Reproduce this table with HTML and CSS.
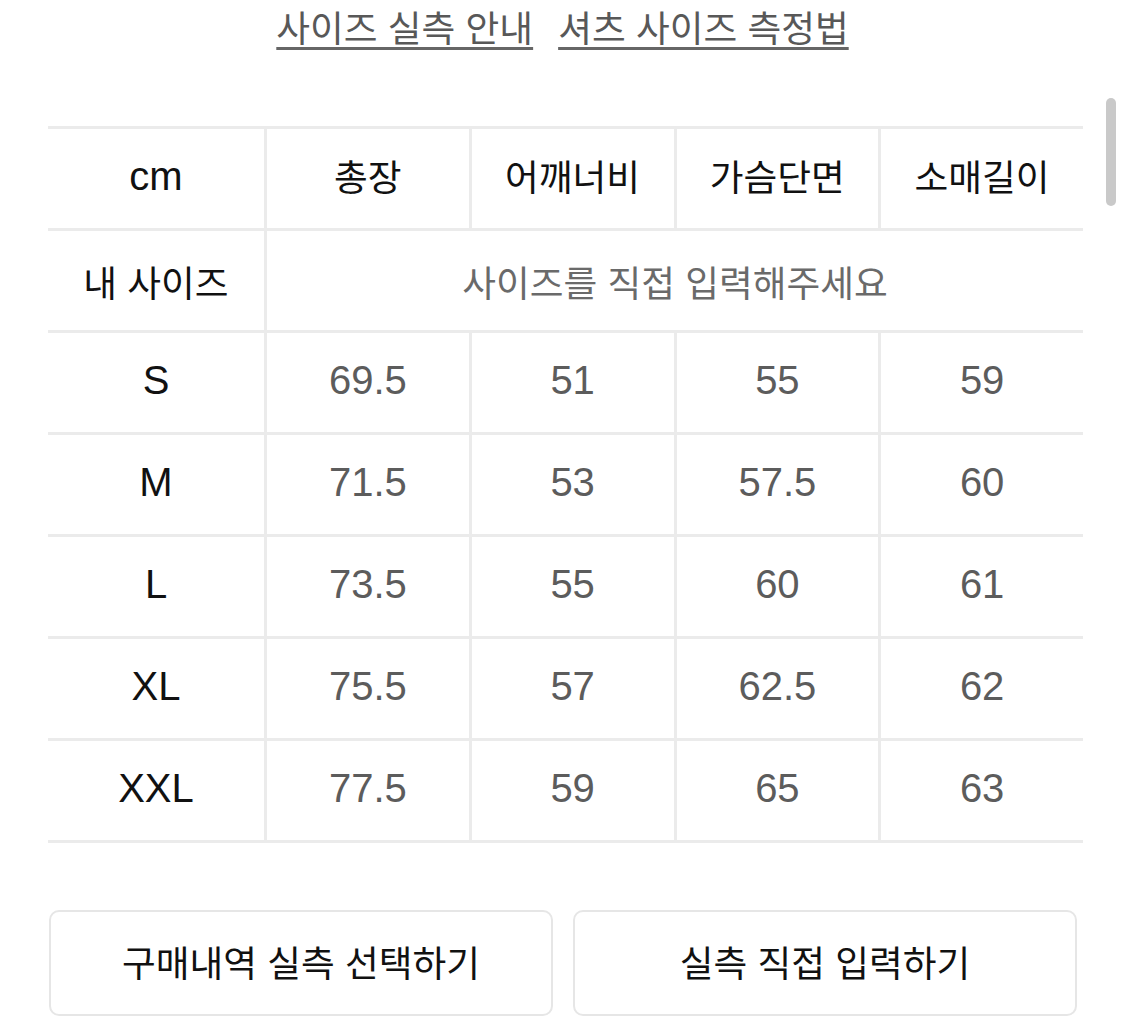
FILE: index.html
```html
<!DOCTYPE html>
<html lang="ko">
<head>
<meta charset="utf-8">
<title>사이즈</title>
<link rel="stylesheet" href="styles.css">
</head>
<body>
<div class="page">
  <div class="guide-links">
    <a class="guide-link" href="#">사이즈 실측 안내</a>
    <a class="guide-link" href="#">셔츠 사이즈 측정법</a>
  </div>

  <div class="size-table">
    <div class="cell first"><span class="lat head">cm</span></div>
    <div class="cell"><span class="ko head col-title">총장</span></div>
    <div class="cell"><span class="ko head col-title">어깨너비</span></div>
    <div class="cell"><span class="ko head col-title">가슴단면</span></div>
    <div class="cell"><span class="ko head col-title">소매길이</span></div>

    <div class="cell first"><span class="ko head">내 사이즈</span></div>
    <div class="cell span4"><span class="ko hint">사이즈를 직접 입력해주세요</span></div>

    <div class="cell first"><span class="lat head">S</span></div>
    <div class="cell"><span class="lat val">69.5</span></div>
    <div class="cell"><span class="lat val">51</span></div>
    <div class="cell"><span class="lat val">55</span></div>
    <div class="cell"><span class="lat val">59</span></div>

    <div class="cell first"><span class="lat head">M</span></div>
    <div class="cell"><span class="lat val">71.5</span></div>
    <div class="cell"><span class="lat val">53</span></div>
    <div class="cell"><span class="lat val">57.5</span></div>
    <div class="cell"><span class="lat val">60</span></div>

    <div class="cell first"><span class="lat head">L</span></div>
    <div class="cell"><span class="lat val">73.5</span></div>
    <div class="cell"><span class="lat val">55</span></div>
    <div class="cell"><span class="lat val">60</span></div>
    <div class="cell"><span class="lat val">61</span></div>

    <div class="cell first"><span class="lat head">XL</span></div>
    <div class="cell"><span class="lat val">75.5</span></div>
    <div class="cell"><span class="lat val">57</span></div>
    <div class="cell"><span class="lat val">62.5</span></div>
    <div class="cell"><span class="lat val">62</span></div>

    <div class="cell first last"><span class="lat head">XXL</span></div>
    <div class="cell last"><span class="lat val">77.5</span></div>
    <div class="cell last"><span class="lat val">59</span></div>
    <div class="cell last"><span class="lat val">65</span></div>
    <div class="cell last"><span class="lat val">63</span></div>
  </div>

  <div class="actions">
    <button class="action-btn" type="button">구매내역 실측 선택하기</button>
    <button class="action-btn" type="button">실측 직접 입력하기</button>
  </div>
</div>
<div class="scroll-thumb"></div>
</body>
</html>
```

FILE: styles.css
```css
html, body {
  margin: 0;
  padding: 0;
  background: #ffffff;
}

body {
  width: 1125px;
  height: 1033px;
  overflow: hidden;
  font-family: "Noto Sans CJK KR", "Noto Sans", sans-serif;
  color: #111111;
}

.page {
  position: relative;
  width: 1125px;
}

.guide-links {
  display: flex;
  justify-content: center;
  gap: 25px;
  height: 126px;
  box-sizing: border-box;
}

.guide-link {
  font-size: 36.7px;
  line-height: 52px;
  height: 52px;
  color: #585858;
  text-decoration: underline;
  text-decoration-color: #666666;
  text-decoration-thickness: 3px;
  text-underline-offset: 5px;
}

.size-table {
  display: grid;
  grid-template-columns: 216px repeat(4, 1fr);
  width: 1035px;
  margin-left: 48px;
}

.cell {
  box-sizing: border-box;
  height: 102px;
  border-top: 3px solid #ebebeb;
  border-left: 3px solid #ebebeb;
  display: flex;
  align-items: center;
  justify-content: center;
}

.cell.first {
  border-left: none;
}

.cell.last {
  height: 105px;
  border-bottom: 3px solid #ebebeb;
}

.cell.span4 {
  grid-column: span 4;
}

.ko {
  font-family: "Noto Sans CJK KR", sans-serif;
  font-size: 36.7px;
}

.col-title {
  margin-bottom: 8px;
}

.lat {
  font-family: "Liberation Sans", Arial, sans-serif;
  font-size: 40px;
  margin-bottom: 4px;
}

.head {
  color: #111111;
  font-weight: 400;
}

.val {
  color: #5c5c5c;
}

.hint {
  color: #6a6a6a;
}

.actions {
  display: flex;
  gap: 20px;
  margin-left: 49px;
  width: 1028px;
  margin-top: 67px;
}

.action-btn {
  flex: 1;
  height: 106px;
  background: #ffffff;
  border: 2px solid #e6e6e6;
  border-radius: 10px;
  font-family: "Noto Sans CJK KR", sans-serif;
  font-size: 36.7px;
  font-weight: 400;
  color: #111111;
  padding: 0 0 4px 0;
}

.scroll-thumb {
  position: absolute;
  left: 1106px;
  top: 98px;
  width: 10px;
  height: 108px;
  border-radius: 5px;
  background: #c9c9c9;
}
```
